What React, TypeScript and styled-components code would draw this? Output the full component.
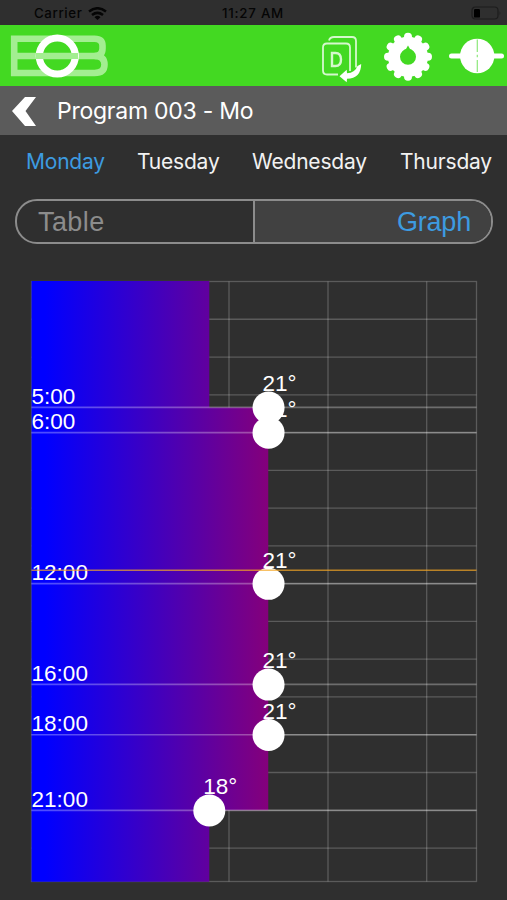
import React from "react";
import styled, { createGlobalStyle } from "styled-components";

const Global = createGlobalStyle`
  * { box-sizing: border-box; }
  body { margin: 0; background: #2f2f2f; }
  svg { display: block; }
`;

const Screen = styled.div`
  width: 507px;
  height: 900px;
  display: flex;
  flex-direction: column;
  background: #2f2f2f;
  color: #fff;
  font-family: Inter, sans-serif;
  overflow: hidden;
`;

const StatusBar = styled.div`
  height: 25px;
  padding: 1px 5px 0 34px;
  display: grid;
  grid-template-columns: 188px 1fr auto;
  align-items: center;
  color: #050505;
  font-size: 13.3px;
  font-weight: 500;
  white-space: nowrap;
`;

const Carrier = styled.div`
  display: flex;
  align-items: center;
  gap: 6px;
  letter-spacing: 0.6px;
`;

const Clock = styled.span`
  letter-spacing: 0.75px;
`;

const Header = styled.header`
  height: 61px;
  background: #43d922;
  display: flex;
  align-items: center;
  justify-content: space-between;
  padding-left: 10px;
`;

const HeaderIcons = styled.div`
  display: flex;
`;

const TitleBar = styled.div`
  height: 49px;
  flex: none;
  background: #5b5b5b;
  display: flex;
  align-items: center;
  gap: 21px;
  padding-left: 12px;
`;

const Title = styled.h1`
  margin: 0;
  font-size: 23px;
  font-weight: 400;
  letter-spacing: -0.25px;
`;

const Days = styled.nav`
  height: 52px;
  display: flex;
  justify-content: space-between;
  align-items: center;
  padding: 0 16px 0 26px;
`;

const Day = styled.span<{ $active?: boolean; $width: number }>`
  width: ${(p) => p.$width}px;
  font-size: 21px;
  letter-spacing: -0.2px;
  white-space: nowrap;
  color: ${(p) => (p.$active ? "#3d9be0" : "#f2f2f2")};
`;

const Segments = styled.div`
  margin: 12px 14px 0 15px;
  height: 45px;
  flex: none;
  display: grid;
  grid-template-columns: 238px 1fr;
  border: 2px solid #8c8c8c;
  border-radius: 22px;
  overflow: hidden;
  font-family: "Liberation Sans", sans-serif;
  font-size: 27px;
  line-height: 43px;
`;

const Segment = styled.div<{ $active?: boolean }>`
  padding: 0 20px 0 21px;
  text-align: ${(p) => (p.$active ? "right" : "left")};
  letter-spacing: ${(p) => (p.$active ? "-0.2px" : "0.4px")};
  color: ${(p) => (p.$active ? "#3d9be0" : "#8c8c8c")};
  background: ${(p) => (p.$active ? "#414141" : "transparent")};
  border-right: ${(p) => (p.$active ? "none" : "2px solid #8c8c8c")};
`;

const ChartArea = styled.main`
  flex: 1;
  padding-top: 22px;
`;

const Logo = () => (
  <svg width="100" height="44" viewBox="10 34 100 44" fill="none">
    <g stroke="#a3ee91" strokeWidth="6.6">
      <path d="M51 38.7H14.2V73H51M14.2 56H100" />
      <path d="M61 38.7H94.5Q102.5 38.7 102.5 45.5V48.5Q102.5 56 94.5 56Q104.5 56 104.5 64.5Q104.5 73 94.5 73H61" />
    </g>
    <circle cx="57.3" cy="56" r="18" stroke="#fff" strokeWidth="7.2" />
    <path d="M36 56H78" stroke="#a3ee91" strokeWidth="6" />
  </svg>
);

const CopyIcon = () => (
  <svg width="58" height="61" viewBox="312 25 58 61" fill="none">
    <g stroke="#d5f8cd" strokeWidth="1.8">
      <path d="M338 74.5H327Q323 74.5 323 70.5V47.5Q323 43.5 327 43.5H346Q350 43.5 350 47.5V71" />
      <path d="M329 40.5Q330 37 334 37H352Q356 37 356 41V67.5" />
    </g>
    <path d="M332 53V66H335.5Q341 66 341 59.5Q341 53 335.5 53Z" stroke="#d5f8cd" strokeWidth="2.4" />
    <path d="M361.2 64Q361 78.5 347 78.7L346.7 82.2L339.5 76.2L346.7 69.8L347 73.2Q355 73 357.5 66Z" fill="#fff" />
  </svg>
);

const teeth = Array.from({ length: 12 }, (_, i) => i * 30);

const GearIcon = () => (
  <svg width="72" height="61" viewBox="370 25 72 61">
    <g fill="#fff">
      {teeth.map((a) => (
        <circle key={a} cx="408" cy="36.8" r="4" transform={`rotate(${a} 408 56.8)`} />
      ))}
    </g>
    <circle cx="408" cy="56.8" r="14" stroke="#fff" strokeWidth="12" fill="none" />
    <path d="M405.4 50L408 45.5L410.6 50Z" fill="#43d922" />
  </svg>
);

const LinkIcon = () => (
  <svg width="65" height="61" viewBox="442 25 65 61">
    <path d="M451.5 56H501.5" stroke="#fff" strokeWidth="5" strokeLinecap="round" />
    <circle cx="477.2" cy="56" r="17.2" fill="#fff" />
    <path d="M477.3 39.5V52M477.3 54.8V57.2M477.3 60V72" stroke="#8de87a" strokeWidth="1.2" />
  </svg>
);

const WifiIcon = () => (
  <svg width="19" height="13" viewBox="0 0 19 13" fill="none" stroke="#050505" strokeWidth="2.5">
    <path d="M1 4.5Q9.5-2 18 4.5M4 8Q9.5 3.8 15 8" />
    <path d="M6.5 10.2Q9.5 7.5 12.5 10.2L9.5 13Z" fill="#050505" stroke="none" />
  </svg>
);

const BatteryIcon = () => (
  <svg width="31" height="15" viewBox="0 0 31 15">
    <rect x="1" y="1" width="26" height="12" rx="3.5" fill="none" stroke="#1d1d1d" strokeWidth="1.2" />
    <rect x="3" y="3" width="6" height="8.6" rx="1.2" fill="#000" />
    <path d="M28.6 5V9.5Q30.3 7.2 28.6 5Z" fill="#1d1d1d" />
  </svg>
);

const TOP = 281.5;
const BOTTOM = 881.5;
const LEFT = 31.5;
const RIGHT = 476.5;
const HOUR = 25.18;
const toY = (h: number) => TOP + h * HOUR;
const toX = (t: number) => 209.3 + (t - 18) * 19.75;

const points = [
  { hour: 5, temp: 21 },
  { hour: 6, temp: 21 },
  { hour: 12, temp: 21 },
  { hour: 16, temp: 21 },
  { hour: 18, temp: 21 },
  { hour: 21, temp: 18 },
];

const gridHours = Array.from({ length: 15 }, (_, i) => (i + 1) * 1.5);

const ChartSvg = styled.svg`
  font-family: "Liberation Sans", sans-serif;
  font-size: 22.5px;
`;

const Chart = () => (
  <ChartSvg width="507" height="634" viewBox="0 266 507 634">
    <defs>
      <linearGradient id="heat" gradientUnits="userSpaceOnUse" x1={LEFT} x2={RIGHT} y1="0" y2="0">
        <stop offset="0" stopColor="#0000ff" />
        <stop offset="0.03" stopColor="#0000ff" />
        <stop offset="1" stopColor="#ff0000" />
      </linearGradient>
    </defs>
    <g stroke="#fff" strokeOpacity="0.21" strokeWidth="1.3" fill="none">
      <rect x={LEFT} y={TOP} width={RIGHT - LEFT} height={BOTTOM - TOP} />
      {gridHours.map((h) => (
        <path key={h} d={`M${LEFT} ${toY(h)}H${RIGHT}`} />
      ))}
      {[229, 328, 426.7].map((x) => (
        <path key={x} d={`M${x} ${TOP}V${BOTTOM}`} />
      ))}
    </g>
    <path
      d={`M${LEFT} ${TOP - 0.5}H${toX(18)}V${toY(5)}H${toX(21) - 0.3}V${toY(21)}H${toX(18)}V${BOTTOM + 0.3}H${LEFT}Z`}
      fill="url(#heat)"
    />
    {points.map(({ hour, temp }) => (
      <g key={hour} fill="#fff">
        <path d={`M${LEFT} ${toY(hour)}H${RIGHT}`} stroke="#fff" strokeOpacity="0.3" strokeWidth="1.7" />
        <text x="31.6" y={toY(hour) - 3.4}>{`${hour}:00`}</text>
        <text x={toX(temp) - 6} y={toY(hour) - 16}>{`${temp}°`}</text>
        <circle cx={toX(temp)} cy={toY(hour) + 0.2} r="16" />
      </g>
    ))}
    <path d={`M${LEFT} 570.2H${RIGHT}`} stroke="#f5a623" strokeOpacity="0.7" strokeWidth="1.5" />
  </ChartSvg>
);

export default function App() {
  return (
    <Screen>
      <Global />
      <StatusBar>
        <Carrier>
          Carrier <WifiIcon />
        </Carrier>
        <Clock>11:27 AM</Clock>
        <BatteryIcon />
      </StatusBar>
      <Header>
        <Logo />
        <HeaderIcons>
          <CopyIcon />
          <GearIcon />
          <LinkIcon />
        </HeaderIcons>
      </Header>
      <TitleBar>
        <svg width="24" height="30" viewBox="0 0 24 30">
          <path d="M13 1H24L13.5 15L24 30H13L0 15Z" fill="#fff" />
        </svg>
        <Title>Program 003 - Mo</Title>
      </TitleBar>
      <Days>
        <Day $active $width={78}>Monday</Day>
        <Day $width={82}>Tuesday</Day>
        <Day $width={115}>Wednesday</Day>
        <Day $width={91}>Thursday</Day>
      </Days>
      <Segments>
        <Segment>Table</Segment>
        <Segment $active>Graph</Segment>
      </Segments>
      <ChartArea>
        <Chart />
      </ChartArea>
    </Screen>
  );
}
